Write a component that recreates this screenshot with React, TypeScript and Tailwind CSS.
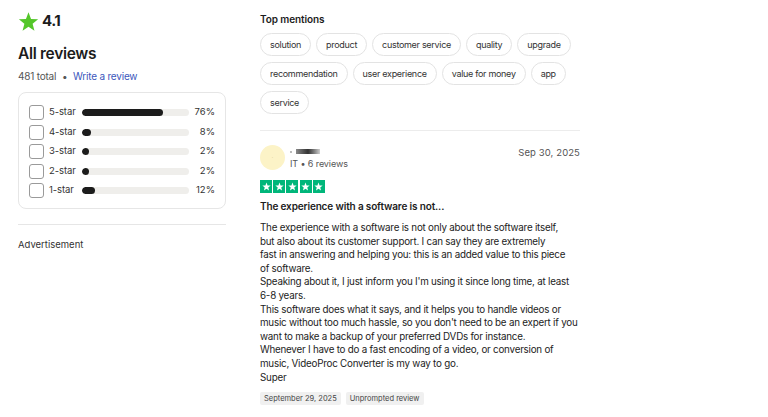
import React from "react";

const rows = [
  { label: "5-star", pct: 76 },
  { label: "4-star", pct: 8 },
  { label: "3-star", pct: 2 },
  { label: "2-star", pct: 2 },
  { label: "1-star", pct: 12 },
];

const chipRows = [
  ["solution", "product", "customer service", "quality", "upgrade"],
  ["recommendation", "user experience", "value for money", "app"],
  ["service"],
];

const body = [
  "The experience with a software is not only about the software itself,",
  "but also about its customer support. I can say they are extremely",
  "fast in answering and helping you: this is an added value to this piece",
  "of software.",
  "Speaking about it, I just inform you I'm using it since long time, at least",
  "6-8 years.",
  "This software does what it says, and it helps you to handle videos or",
  "music without too much hassle, so you don't need to be an expert if you",
  "want to make a backup of your preferred DVDs for instance.",
  "Whenever I have to do a fast encoding of a video, or conversion of",
  "music, VideoProc Converter is my way to go.",
  "Super",
];

function Star({ className, fill }: { className?: string; fill: string }) {
  return (
    <svg viewBox="0 0 24 24" className={className}>
      <path
        d="M12 1.5l2.9 7.6 8.1.4-6.3 5.1 2.1 7.9L12 18l-6.8 4.5 2.1-7.9L1 9.5l8.1-.4z"
        fill={fill}
      />
    </svg>
  );
}

export default function App() {
  return (
    <div
      className="w-[768px] h-[417px] overflow-hidden bg-white text-[#1c1c1c] flex"
      style={{ fontFamily: "Inter, 'Liberation Sans', sans-serif" }}
    >
      {/* Left column */}
      <div className="w-[208px] ml-[18px] pt-[11px] flex flex-col">
        <div className="flex items-center gap-[3px] h-[20px]">
          <Star className="w-[21px] h-[21px]" fill="#54c62a" />
          <span className="text-[15px] font-bold tracking-[-0.5px]">4.1</span>
        </div>
        <div className="mt-[13px] text-[15.5px] font-semibold tracking-[-0.3px] leading-[20px]">
          All reviews
        </div>
        <div className="mt-[5px] text-[10px] leading-[14px] text-[#555] tracking-[-0.2px]">
          481 total <span className="mx-[3px]">•</span>{" "}
          <span className="text-[#3c57bc]">Write a review</span>
        </div>
        <div className="mt-[9px] border border-[#e6e6e6] rounded-[8px] px-[10px] pt-[12px] pb-[10px] flex flex-col gap-[4.5px]">
          {rows.map((r) => (
            <div key={r.label} className="flex items-center h-[15px]">
              <div className="w-[15px] h-[15px] border border-[#9a9a9a] rounded-[3px] shrink-0" />
              <span className="ml-[5px] w-[33px] text-[9.5px] text-[#333] tracking-[-0.1px]">
                {r.label}
              </span>
              <div className="w-[107px] h-[7px] rounded-full bg-[#efeeeb] overflow-hidden">
                <div
                  className="h-full rounded-full bg-[#1c1c1c]"
                  style={{ width: `${Math.max(7, (r.pct / 100) * 107)}px` }}
                />
              </div>
              <span className="flex-1 text-right text-[9.5px] text-[#333]">{r.pct}%</span>
            </div>
          ))}
        </div>
        <div className="mt-[15px] h-px bg-[#e6e6e6]" />
        <div className="mt-[13px] text-[9.5px] text-[#333]">Advertisement</div>
      </div>

      {/* Right column */}
      <div className="ml-[34px] w-[320px] pt-[12px] flex flex-col">
        <div className="text-[10px] font-semibold leading-[14px] tracking-[-0.1px]">Top mentions</div>
        <div className="mt-[7px] flex flex-col gap-[6px]">
          {chipRows.map((row, i) => (
            <div key={i} className="flex gap-[5px]">
              {row.map((c) => (
                <span
                  key={c}
                  className="h-[23px] px-[9px] flex items-center whitespace-nowrap rounded-full border border-[#e3e3e3] text-[9px] text-[#333] tracking-[-0.3px]"
                >
                  {c}
                </span>
              ))}
            </div>
          ))}
        </div>
        <div className="mt-[16px] h-px bg-[#ececec]" />
        <div className="mt-[14px] flex justify-between">
          <div className="flex items-center gap-[5px]">
            <div className="w-[25px] h-[25px] rounded-full bg-[#fcf3c7] flex items-center justify-center">
              <span className="text-[5px] text-[#c8b878]">·</span>
            </div>
            <div className="flex flex-col">
              <div className="flex items-center gap-[4px] h-[12px]">
                <span className="w-[2px] h-[2px] bg-[#bbb]" />
                <span className="w-[24px] h-[5px] bg-gradient-to-r from-[#8a8a8a] via-[#333] to-[#cfcfcf]" />
              </div>
              <div className="text-[9px] text-[#555] leading-[12px] tracking-[-0.1px]">IT • 6 reviews</div>
            </div>
          </div>
          <div className="text-[9.5px] text-[#555] mt-[1px] tracking-[0.1px]">Sep 30, 2025</div>
        </div>
        <div className="mt-[10px] flex gap-[1.2px]">
          {[0, 1, 2, 3, 4].map((i) => (
            <div key={i} className="w-[12px] h-[13px] bg-[#00b67a] flex items-center justify-center">
              <Star className="w-[9px] h-[9px]" fill="#ffffff" />
            </div>
          ))}
        </div>
        <div className="mt-[6px] text-[10px] font-semibold leading-[14px] tracking-[-0.15px]">
          The experience with a software is not...
        </div>
        <div className="mt-[8px] text-[9.8px] leading-[13.6px] tracking-[-0.22px] text-[#1c1c1c]">
          {body.map((l, i) => (
            <div key={i} className="whitespace-nowrap">{l}</div>
          ))}
        </div>
        <div className="mt-[8px] flex gap-[5px]">
          <span className="px-[4px] h-[13px] flex items-center bg-[#f0f0f0] rounded-[2px] text-[7.5px] text-[#444]">
            September 29, 2025
          </span>
          <span className="px-[4px] h-[13px] flex items-center bg-[#f0f0f0] rounded-[2px] text-[7.5px] text-[#444]">
            Unprompted review
          </span>
        </div>
      </div>
    </div>
  );
}
